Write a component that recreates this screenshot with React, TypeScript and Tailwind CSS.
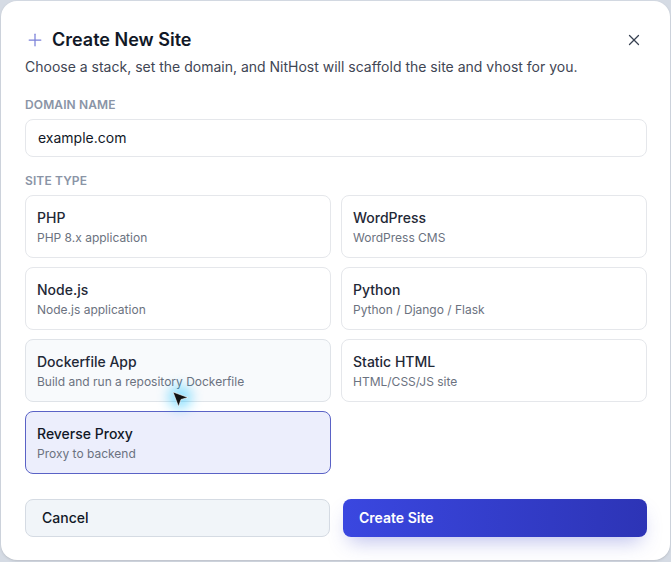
import { Plus, X } from 'lucide-react'

const siteTypes = [
  { name: 'PHP', desc: 'PHP 8.x application' },
  { name: 'WordPress', desc: 'WordPress CMS' },
  { name: 'Node.js', desc: 'Node.js application' },
  { name: 'Python', desc: 'Python / Django / Flask' },
  { name: 'Dockerfile App', desc: 'Build and run a repository Dockerfile', hover: true },
  { name: 'Static HTML', desc: 'HTML/CSS/JS site' },
  { name: 'Reverse Proxy', desc: 'Proxy to backend', selected: true },
]

function Cursor() {
  return (
    <div className="pointer-events-none absolute left-[171px] top-[390px]">
      <div className="absolute -left-[4px] -top-[6px] size-6 rounded-full bg-sky-400/40 blur-[6px]" />
      <svg width="18" height="18" viewBox="0 0 18 18" className="relative">
        <path d="M1 1 L16 6.5 L9 8.5 L6.5 15.5 Z" fill="#111" stroke="#fff" strokeWidth="0.6" strokeLinejoin="round" />
      </svg>
    </div>
  )
}

export default function App() {
  return (
    <div className="h-[562px] w-[671px] bg-[#d5dbe4] p-px font-['Inter',sans-serif]">
      <div className="relative flex h-[559px] flex-col rounded-2xl bg-white pl-6 pr-[23px] pt-[25px] shadow-sm">
        <div className="flex items-center justify-between">
          <div className="flex items-center gap-[7px]">
            <Plus className="size-5 text-[#7a80d8]" strokeWidth={1.5} />
            <h2 className="text-lg font-semibold leading-7 text-[#111827]">Create New Site</h2>
          </div>
          <X className="mr-[4px] size-[18px] text-[#374151]" strokeWidth={1.7} />
        </div>
        <p className="mt-[3px] text-sm leading-5 text-[#3f4654]">
          Choose a stack, set the domain, and NitHost will scaffold the site and vhost for you.
        </p>

        <label className="mt-[20px] text-xs font-semibold uppercase leading-4 tracking-[0.01em] text-[#8a94a6]">
          Domain Name
        </label>
        <div className="mt-[6px] flex h-[38px] items-center rounded-lg border border-[#e5e7eb] px-3 text-sm text-[#111827]">
          example.com
        </div>

        <label className="mt-[16px] text-xs font-semibold uppercase leading-4 tracking-[0.01em] text-[#8a94a6]">
          Site Type
        </label>
        <div className="mt-[6px] grid grid-cols-2 gap-x-[10px] gap-y-[9px]">
          {siteTypes.map((t) => (
            <div
              key={t.name}
              className={
                t.selected
                  ? 'flex h-[63px] flex-col justify-center rounded-lg border border-[#5a62c6] bg-[#eceefc] px-[11px] pt-[3px]'
                  : t.hover
                    ? 'flex h-[63px] flex-col justify-center rounded-lg border border-[#dfe3e8] bg-[#f8fafc] px-[11px] pt-[3px]'
                    : 'flex h-[63px] flex-col justify-center rounded-lg border border-[#e5e7eb] bg-white px-[11px] pt-[3px]'
              }
            >
              <div className={t.selected ? 'text-sm font-medium leading-5 text-[#111827]' : 'text-sm font-medium leading-5 text-[#1f2937]'}>
                {t.name}
              </div>
              <div className="text-xs leading-5 text-[#6b7280]">{t.desc}</div>
            </div>
          ))}
        </div>

        <div className="mt-[25px] grid grid-cols-[305px_1fr] gap-[13px]">
          <button className="flex h-[38px] items-center rounded-lg border border-[#d5dbe3] bg-[#f1f5f9] px-4 text-sm font-medium text-[#111827]">
            Cancel
          </button>
          <button className="flex h-[38px] items-center rounded-lg bg-gradient-to-r from-[#3a47e0] to-[#2d34b6] px-4 text-sm font-semibold text-white shadow-[0_10px_20px_-6px_rgba(60,70,200,0.35)]">
            Create Site
          </button>
        </div>
        <Cursor />
      </div>
    </div>
  )
}
